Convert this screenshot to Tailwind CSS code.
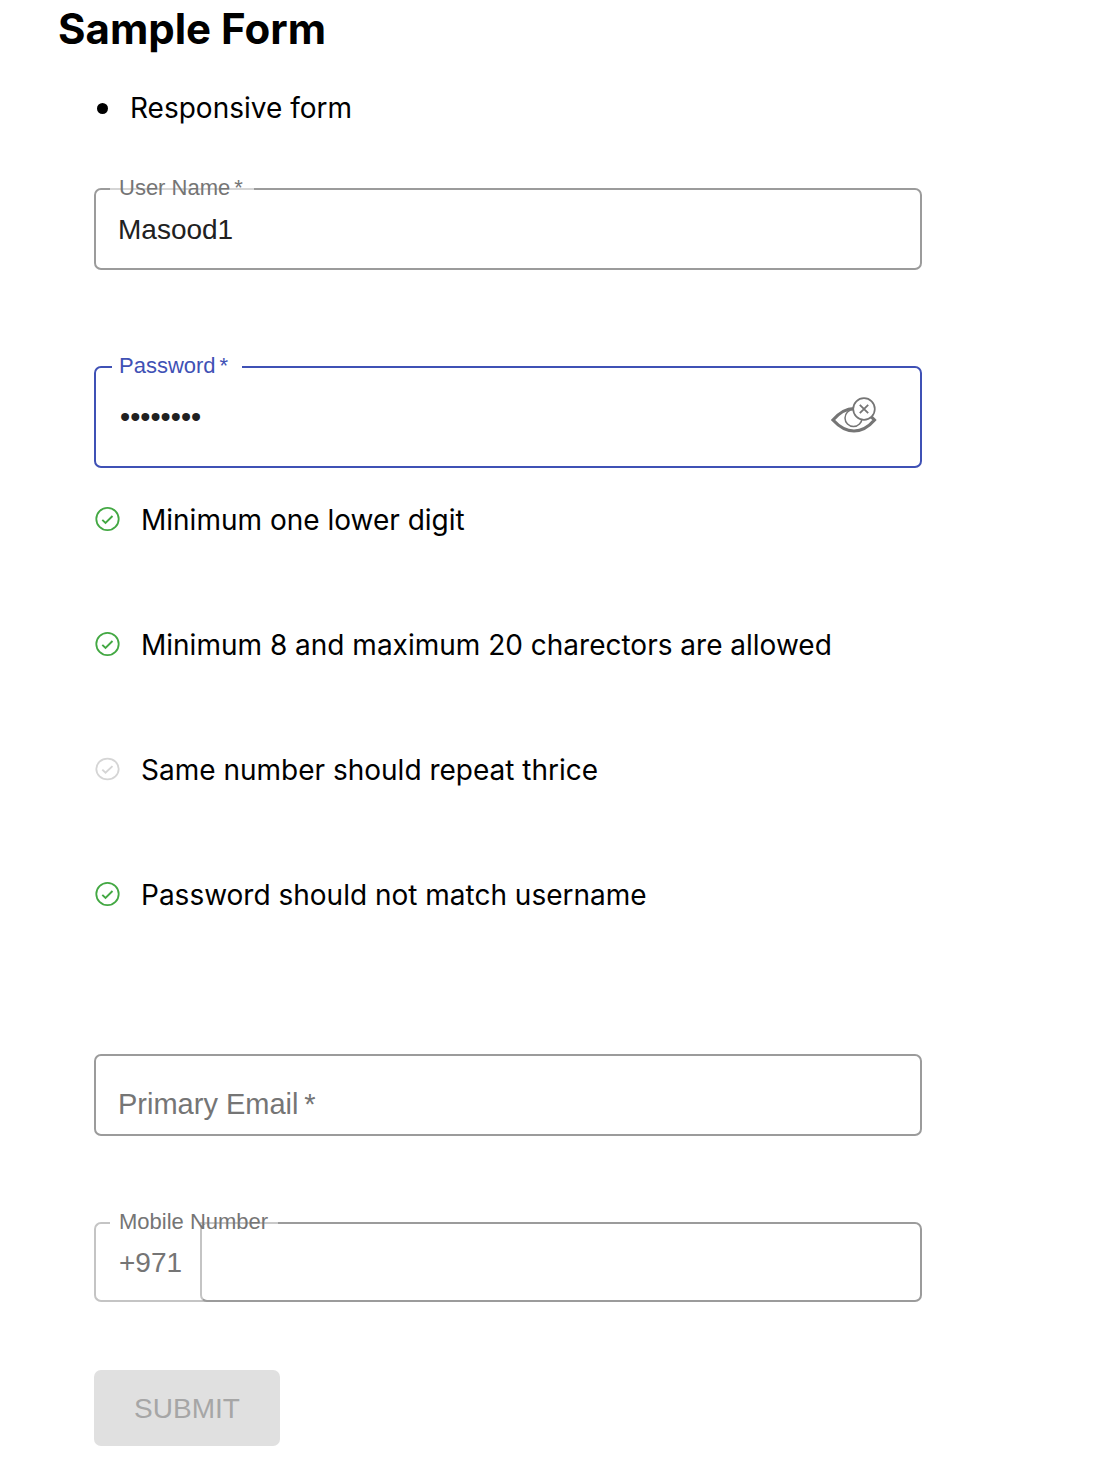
<!DOCTYPE html>
<html lang="en">
<head>
<meta charset="utf-8">
<meta name="viewport" content="width=device-width, initial-scale=1">
<title>Sample Form</title>
<script src="https://cdn.jsdelivr.net/npm/@tailwindcss/browser@4"></script>
</head>
<body class="bg-white text-black text-[28px] leading-9 font-['Inter',sans-serif]">
<svg class="hidden" aria-hidden="true">
  <symbol id="check" viewBox="0 0 26 26">
    <circle cx="13.500" cy="13" r="11.2" fill="none" stroke="currentColor" stroke-width="1.8"/>
    <path d="M8.300 13.800l3.200 3.200 7-7" fill="none" stroke="currentColor" stroke-width="1.9"/>
  </symbol>
</svg>
<main class="pl-[58px] pr-44 pb-[30px]">
  <h1 class="pt-[3px] text-[42px] leading-[52px] font-bold">Sample Form</h1>
  <ul class="mt-[35px] pl-10">
    <li class="flex items-center gap-[22px]"><span class="ml-[-1px] size-[11px] rounded-full bg-black"></span>Responsive form</li>
  </ul>

  <form class="mt-[62px] pl-9 font-['Liberation_Sans',sans-serif]">
    <div class="relative h-[82px] rounded-[7px] border-2 border-[#9b9b9b]">
      <label for="user" class="absolute -top-[14px] left-[14px] flex h-6 w-36 items-center text-[22px] leading-6 text-[#757575]">
        <span class="absolute inset-x-0 top-3 h-[2px] bg-white"></span>
        <span class="absolute inset-x-0 top-3 h-[2px] bg-[#d5d5d5]"></span>
        <span class="relative pl-[9px]">User Name<span class="pl-1">*</span></span>
      </label>
      <input id="user" type="text" value="Masood1" class="size-full rounded-[5px] px-[22px] pt-[2px] text-[#212121] outline-none">
    </div>

    <div class="relative mt-24 flex h-[102px] items-center rounded-[7px] border-2 border-[#3f51b5] pr-[43px]">
      <label for="pass" class="absolute -top-[14px] left-4 h-6 w-[130px] bg-white pl-[7px] text-[22px] leading-6 text-[#3f51b5]">Password<span class="pl-1">*</span></label>
      <input id="pass" type="password" value="masood12" class="h-full min-w-0 flex-1 bg-transparent pl-6 text-[29px] text-[#212121] outline-none">
      <button type="button" aria-label="Toggle password visibility" class="pb-1 text-[#757575]">
        <svg class="block h-9 w-[46px]" viewBox="0 0 46 36" fill="none" stroke="currentColor">
          <path d="M2 23Q12 11.500 23 11.500Q34 12 43.500 23Q34 34 23 34Q12 34 2 23Z" stroke-width="3.200"/>
          <circle cx="22.500" cy="21" r="8.500" stroke-width="1.500"/>
          <circle cx="33" cy="12" r="10.800" fill="#fff" stroke-width="1.700"/>
          <path d="M28.800 7.800l8.400 8.400M37.200 7.800l-8.400 8.400" stroke-width="1.800"/>
        </svg>
      </button>
    </div>

    <ul class="mt-[34px] flex flex-col gap-[89px] font-['Inter',sans-serif]">
      <li class="flex items-center gap-[21px]"><svg class="mb-[2px] size-[26px] shrink-0 text-[#43a843]"><use href="#check"/></svg>Minimum one lower digit</li>
      <li class="flex items-center gap-[21px]"><svg class="mb-[2px] size-[26px] shrink-0 text-[#43a843]"><use href="#check"/></svg>Minimum 8 and maximum 20 charectors are allowed</li>
      <li class="flex items-center gap-[21px]"><svg class="mb-[2px] h-6 w-[26px] shrink-0 text-[#d5d5d5]" viewBox="0 0 26 26" preserveAspectRatio="none"><use href="#check" width="26" height="26"/></svg>Same number should repeat thrice</li>
      <li class="flex items-center gap-[21px]"><svg class="mb-[2px] size-[26px] shrink-0 text-[#43a843]"><use href="#check"/></svg>Password should not match username</li>
    </ul>

    <input type="email" aria-label="Primary Email" placeholder="Primary Email&thinsp;*" class="mt-[141px] block h-[82px] w-full rounded-[7px] border-2 border-[#9b9b9b] px-[22px] pt-[18px] text-[29px] leading-9 placeholder:text-[#757575] outline-none">

    <div class="relative mt-[86px] flex h-20 rounded-[7px] bg-white">
      <div class="-mr-2 flex w-[114px] items-center rounded-l-[7px] border-2 border-r-0 border-[#c4c4c4] pt-[2px] pl-[23px] text-[#757575]">+971</div>
      <input id="mobile" type="tel" class="min-w-0 flex-1 rounded-[7px] border-2 border-[#9b9b9b] border-l-[#c4c4c4] bg-white px-6 outline-none">
      <label for="mobile" class="absolute -top-3 left-4 h-6 w-[168px] text-[22px] leading-6 text-[#757575]">
        <span class="absolute top-3 left-0 h-[2px] w-[90px] bg-white"></span>
        <span class="absolute top-3 right-0 h-[2px] w-[78px] bg-[#c9c9c9]"></span>
        <span class="relative pl-[9px]">Mobile Number</span>
      </label>
    </div>

    <button type="submit" disabled class="mt-[68px] h-[76px] w-[186px] rounded-[7px] bg-[#e0e0e0] pt-[2px] text-[#a6a6a6]">SUBMIT</button>
  </form>
</main>
</body>
</html>
